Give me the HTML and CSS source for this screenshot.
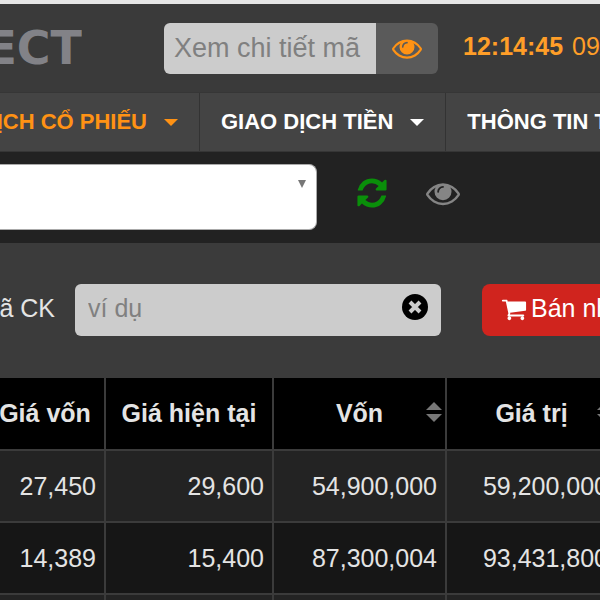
FILE: index.html
```html
<!DOCTYPE html>
<html lang="vi">
<head>
    <meta charset="UTF-8">
    <meta name="viewport" content="width=device-width, initial-scale=1.0">
    <title>VNDIRECT</title>
    <link rel="stylesheet" href="styles.css">
</head>
<body>

<!-- Header -->
<header class="header">
    <a href="#" class="logo">VNDIRECT</a>
    <form class="search">
        <input type="text" class="search-input" placeholder="Xem chi tiết mã" aria-label="Xem chi tiết mã">
        <button type="button" class="search-btn" aria-label="Xem">
            <svg class="icon-eye" viewBox="0 0 1792 1792"><path d="M1664 960q-152-236-381-353 61 104 61 225 0 185-131.5 316.5t-316.5 131.5-316.5-131.5-131.5-316.5q0-121 61-225-229 117-381 353 133 205 333.5 326.5t434.5 121.5 434.5-121.5 333.5-326.5zm-720-384q0-20-14-34t-34-14q-125 0-214.5 89.5t-89.5 214.5q0 20 14 34t34 14 34-14 14-34q0-86 61-147t147-61q20 0 34-14t14-34zm848 384q0 34-20 69-140 230-376.5 368.5t-499.5 138.5-499.5-139-376.5-368q-20-35-20-69t20-69q140-229 376.5-368t499.5-139 499.5 139 376.5 368q20 35 20 69z"/></svg>
        </button>
    </form>
    <div class="clock"><b>12:14:45</b> <span class="date">09/</span></div>
</header>

<!-- Main menu -->
<nav class="menu">
    <a href="#" class="menu-item active">GIAO DỊCH CỔ PHIẾU <span class="caret"></span></a>
    <a href="#" class="menu-item">GIAO DỊCH TIỀN <span class="caret"></span></a>
    <a href="#" class="menu-item">THÔNG TIN TÀI KHOẢN</a>
</nav>

<!-- Account bar -->
<div class="account">
    <div class="select-box">
        <select class="account-select" aria-label="Tài khoản">
            <option></option>
        </select>
        <span class="select-arrow"></span>
    </div>
    <button type="button" class="icon-btn refresh" aria-label="Làm mới">
        <svg viewBox="0 0 1792 1792"><path d="M1639 1056q0 5-1 7-64 268-268 434.500t-478 166.500q-146 0-282.500-55t-243.500-157l-129 129q-19 19-45 19t-45-19-19-45v-448q0-26 19-45t45-19h448q26 0 45 19t19 45-19 45l-137 137q71 66 161 102t187 36q134 0 250-65t186-179q11-17 53-117 8-23 30-23h192q13 0 22.500 9.500t9.500 22.500zm25-800v448q0 26-19 45t-45 19h-448q-26 0-45-19t-19-45 19-45l138-138q-148-137-349-137-134 0-250 65t-186 179q-11 17-53 117-8 23-30 23h-199q-13 0-22.500-9.500t-9.500-22.500v-7q65-268 270-434.500t480-166.500q146 0 284 55.500t245 156.500l130-129q19-19 45-19t45 19 19 45z"/></svg>
    </button>
    <button type="button" class="icon-btn view" aria-label="Hiển thị">
        <svg viewBox="0 0 1792 1792"><path d="M1664 960q-152-236-381-353 61 104 61 225 0 185-131.500 316.500t-316.500 131.500-316.500-131.500-131.500-316.500q0-121 61-225-229 117-381 353 133 205 333.500 326.500t434.500 121.500 434.500-121.500 333.500-326.500zm-720-384q0-20-14-34t-34-14q-125 0-214.500 89.500t-89.500 214.500q0 20 14 34t34 14 34-14 14-34q0-86 61-147t147-61q20 0 34-14t14-34zm848 384q0 34-20 69-140 230-376.500 368.500t-499.500 138.500-499.500-139-376.500-368q-20-35-20-69t20-69q140-229 376.500-368t499.500-139 499.500 139 376.500 368q20 35 20 69z"/></svg>
    </button>
</div>

<!-- Filter -->
<form class="filter">
    <label for="symbol" class="filter-label">Mã CK</label>
    <div class="filter-box">
        <input type="text" id="symbol" class="filter-input" placeholder="ví dụ">
        <button type="button" class="clear-btn" aria-label="Xóa">
            <svg viewBox="0 0 26 26"><circle cx="13" cy="13" r="13"/><path d="M8 8l10 10M18 8l-10 10"/></svg>
        </button>
    </div>
    <button type="button" class="sell-btn">
        <svg viewBox="0 0 1792 1792"><path d="M704 1536q0 52-38 90t-90 38-90-38-38-90 38-90 90-38 90 38 38 90zm896 0q0 52-38 90t-90 38-90-38-38-90 38-90 90-38 90 38 38 90zm128-1088v512q0 24-16.500 42.500t-40.500 21.500l-1044 122q13 60 13 70 0 16-24 64h920q26 0 45 19t19 45-19 45-45 19h-1024q-26 0-45-19t-19-45q0-11 8-31.500t16-36 21.500-40 15.500-29.500l-177-823h-204q-26 0-45-19t-19-45 19-45 45-19h256q16 0 28.500 6.500t19.500 15.500 13 24.500 8 26 5.500 29.500 4.500 26h1201q26 0 45 19t19 45z"/></svg>
        Bán nhanh
    </button>
</form>

<!-- Portfolio -->
<div class="table-wrap">
    <table class="portfolio">
        <thead>
            <tr>
                <th class="col-cost">Giá vốn</th>
                <th class="col-price">Giá hiện tại</th>
                <th class="col-total">
                    <button type="button" class="sort-btn">Vốn <span class="sort"></span></button>
                </th>
                <th>
                    <button type="button" class="sort-btn">Giá trị <span class="sort"></span></button>
                </th>
            </tr>
        </thead>
        <tbody>
            <tr>
                <td>27,450</td>
                <td>29,600</td>
                <td>54,900,000</td>
                <td>59,200,000</td>
            </tr>
            <tr>
                <td>14,389</td>
                <td>15,400</td>
                <td>87,300,004</td>
                <td>93,431,800</td>
            </tr>
            <tr>
                <td></td>
                <td></td>
                <td></td>
                <td></td>
            </tr>
        </tbody>
    </table>
</div>

</body>
</html>
```
FILE: styles.css
```css
* {
    box-sizing: border-box;
}

html {
    height: 100%;
    overflow: hidden;
}

body {
    margin: 0;
    height: 100%;
    overflow: hidden;
    background: #3b3b3b;
    color: #e4e4e4;
    font-family: "Liberation Sans", Arial, sans-serif;
    font-size: 25px;
    white-space: nowrap;
}

a {
    color: inherit;
    text-decoration: none;
}

button,
input,
select {
    margin: 0;
    padding: 0;
    border: none;
    font-family: inherit;
    font-size: inherit;
    color: inherit;
}

button {
    background: none;
    cursor: pointer;
}

svg {
    display: block;
    flex: none;
    fill: currentColor;
}

/* Header */
.header {
    display: flex;
    align-items: center;
    height: 92px;
    border-top: 4px solid #e6e6e6;
    background: #3a3a3a;
}

.logo {
    display: flex;
    flex: none;
    justify-content: flex-end;
    width: 82px;
    margin-right: 82px;
    overflow: hidden;
    color: #828287;
    font-family: "DejaVu Sans", sans-serif;
    font-size: 46px;
    font-weight: bold;
    line-height: 48px;
}

.search {
    display: flex;
    flex: none;
    height: 51px;
    overflow: hidden;
    border-radius: 6px;
}

.search-input {
    width: 212px;
    padding: 0 10px;
    background: #ccc;
    font-size: 27px;
}

.search-input::placeholder,
.filter-input::placeholder {
    color: #808080;
    opacity: 1;
}

.search-btn {
    display: flex;
    align-items: center;
    justify-content: center;
    width: 62px;
    background: #5a5a5a;
    color: #ff9214;
}

.icon-eye {
    width: 30px;
    height: 30px;
}

.clock {
    margin-left: 25px;
    padding-bottom: 4px;
    color: #ff9e28;
}

.date {
    margin-left: 2px;
}

/* Menu */
.menu {
    display: flex;
    height: 60px;
    border-top: 1px solid #363636;
    border-bottom: 1px solid #363636;
    background: #444;
    color: #fff;
    font-size: 22px;
    font-weight: bold;
}

.menu-item {
    display: flex;
    flex: none;
    align-items: center;
    gap: 17px;
    padding: 0 21px;
    border-right: 1px solid #333;
}

.menu-item.active {
    justify-content: flex-end;
    width: 200px;
    color: #ff9214;
}

.caret {
    flex: none;
    border: 7px solid transparent;
    border-top-color: currentColor;
    border-bottom: none;
}

/* Account bar */
.account {
    display: flex;
    align-items: center;
    height: 91px;
    padding-bottom: 2px;
    background: #222;
}

.select-box {
    position: relative;
    flex: none;
    width: 317px;
    margin-right: 38px;
}

.account-select {
    display: block;
    width: 100%;
    height: 66px;
    border: 1px solid #aaa;
    border-left: none;
    border-radius: 0 8px 8px 0;
    background: #fff;
    color: #444;
    appearance: none;
}

.select-arrow {
    position: absolute;
    top: 16px;
    right: 11px;
    border: 4px solid transparent;
    border-top: 8px solid #777;
    border-bottom: none;
    pointer-events: none;
}

.icon-btn {
    padding-bottom: 8px;
}

.icon-btn svg {
    width: 34px;
    height: 34px;
}

.refresh {
    margin-right: 37px;
    color: #0a8f0a;
}

.view {
    color: #858585;
}

/* Filter */
.filter {
    display: flex;
    align-items: center;
    height: 135px;
    padding-bottom: 2px;
}

.filter-label {
    display: flex;
    flex: none;
    justify-content: flex-end;
    width: 55px;
    margin-right: 20px;
    padding-bottom: 2px;
}

.filter-box {
    position: relative;
    flex: none;
    width: 366px;
    margin-right: 41px;
}

.filter-input {
    display: block;
    width: 100%;
    height: 52px;
    padding: 0 13px 2px;
    border-radius: 6px;
    background: #ccc;
}

.clear-btn {
    position: absolute;
    top: 10px;
    right: 13px;
    color: #000;
}

.clear-btn svg {
    width: 26px;
    height: 26px;
}

.clear-btn path {
    stroke: #ccc;
    stroke-width: 4;
}

.sell-btn {
    display: flex;
    flex: none;
    align-items: center;
    gap: 4px;
    height: 52px;
    padding: 0 19px 2px;
    border-radius: 8px;
    background: #d0241e;
    color: #fff;
}

.sell-btn svg {
    width: 26px;
    height: 26px;
}

/* Portfolio table, the first column runs under the left edge */
.table-wrap {
    margin-left: -14px;
}

.portfolio {
    width: 632px;
    table-layout: fixed;
    border-spacing: 0;
}

.portfolio th,
.portfolio td {
    height: 72px;
    padding: 0 8px;
    border-right: 2px solid #3b3b3b;
    border-bottom: 2px solid #3b3b3b;
}

.portfolio th {
    height: 73px;
    padding: 0;
    background: #000;
}

.portfolio td {
    text-align: right;
    background: #232323;
}

.portfolio tr:nth-child(even) td {
    background: #161616;
}

.col-cost {
    width: 120px;
}

.col-price {
    width: 168px;
}

.col-total {
    width: 173px;
}

.sort-btn {
    display: grid;
    grid-template-columns: 16px 1fr 16px;
    align-items: center;
    width: 100%;
    padding: 0 3px;
    font-weight: bold;
}

.sort-btn::before {
    content: "";
}

.sort {
    display: grid;
    gap: 4px;
    justify-items: center;
    padding-bottom: 4px;
}

.sort::before,
.sort::after {
    content: "";
    border: 8px solid transparent;
}

.sort::before {
    border-top: none;
    border-bottom-color: #777;
}

.sort::after {
    border-top-color: #777;
    border-bottom: none;
}
```
